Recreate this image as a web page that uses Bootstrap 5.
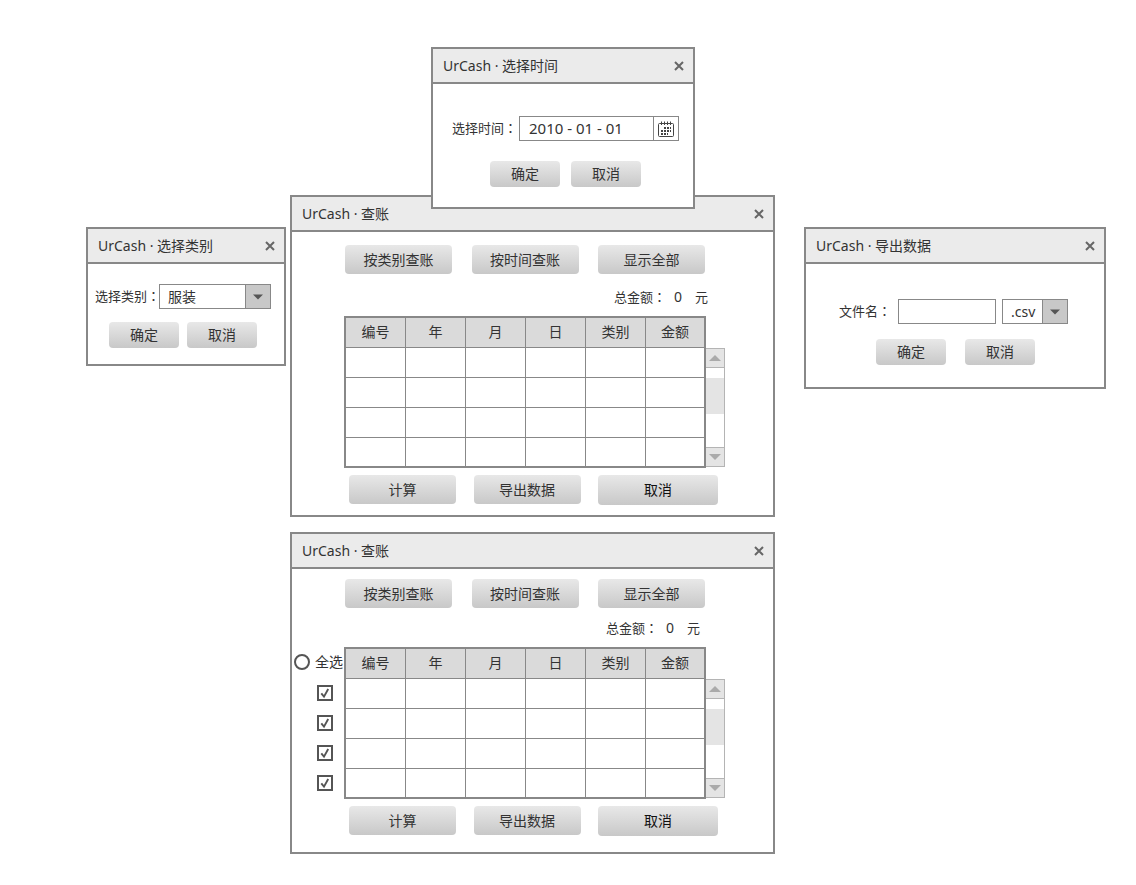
<!DOCTYPE html>
<html lang="zh-CN">
<head>
<meta charset="utf-8">
<meta name="viewport" content="width=device-width, initial-scale=1">
<title>UrCash</title>
<link href="https://cdn.jsdelivr.net/npm/bootstrap@5.3.0/dist/css/bootstrap.min.css" rel="stylesheet">
<style>
  :root { --line: #888; --ink: #333; }
  body { font-family: "Noto Sans", "Noto Sans CJK SC", sans-serif; font-size: 14px; line-height: 20px; color: var(--ink); background: #fff; }
  .desk { padding: 47px 24px 24px 86px; min-width: 1106px; }
  .win { border: 2px solid var(--line); background: #fff; }
  .win-bar { height: 35px; padding: 0 9px 0 10px; background: #ebebeb; border-bottom: 2px solid var(--line); }
  .win-bar h2 { font-size: 14px; line-height: 20px; font-weight: 400; }
  .win-close { width: 10px; height: 10px; color: #666; line-height: 0; }
  .win-side { margin-top: 180px; }
  .win-type { width: 200px; height: 139px; margin-right: 4px; }
  .win-export { width: 302px; height: 162px; margin-left: 29px; }
  .win-time { width: 264px; height: 162px; margin-left: 141px; margin-bottom: -14px; z-index: 2; }
  .win-main { width: 485px; height: 322px; }
  .gbtn { --bs-btn-font-size: 14px; --bs-btn-line-height: 20px; --bs-btn-padding-x: 0; --bs-btn-padding-y: 0; --bs-btn-border-width: 0; --bs-btn-border-radius: 4px; --bs-btn-color: var(--ink); --bs-btn-hover-color: #000; width: 107px; height: 29px; background: linear-gradient(#e8e8e8, #c8c8c8); }
  .gbtn-sm { width: 70px; height: 26px; }
  .gbtn-lg { --bs-btn-color: #111; width: 120px; height: 30px; }
  .lbl { font-size: 13px; white-space: nowrap; padding-bottom: 2px; min-width: 0; }
  .colon { font-family: "Noto Sans CJK TC", sans-serif; }
  .field { height: 25px; border: 1px solid var(--line); border-radius: 0; background: #fff; color: var(--ink); font-size: 14px; line-height: 20px; padding: 0 9px; min-width: 0; }
  select.field { appearance: none; width: 100%; padding-left: 8px; }
  .drop-cap { right: 0; top: 0; width: 26px; height: 25px; background: #c8c8c8; border: 1px solid var(--line); pointer-events: none; }
  .cal-btn { width: 25px; height: 25px; border: 1px solid var(--line); border-left: 0; background: #fff; }
  .time-field { width: 135px; font-size: 15px; padding-bottom: 2px; }
  .sum { height: 20px; margin-bottom: 8px; padding-bottom: 2px; font-size: 13px; }
  .sum output { font-size: 14px; margin: 0 13px 0 8px; }
  .gutter { width: 52px; }
  .all-pick { height: 31px; padding: 0 0 2px 2px; gap: 5px; }
  .all-pick label { white-space: nowrap; }
  .row-pick { height: 30px; padding-right: 11px; }
  .tick { appearance: none; width: 16px; height: 16px; margin: 0; border: 2px solid #555; background: #fff; }
  .tick[type=radio] { border-radius: 50%; }
  .tick[type=checkbox]:checked { background: url("data:image/svg+xml,%3Csvg xmlns='http://www.w3.org/2000/svg' viewBox='0 0 12 12'%3E%3Cpath d='M2.3 6.3 5 9.6 9.2 2' fill='none' stroke='%23555' stroke-width='1.9'/%3E%3C/svg%3E") center / 12px 12px no-repeat; }
  .ledger { width: 362px; table-layout: fixed; border: 2px solid var(--line); border-collapse: separate; border-spacing: 0; }
  .ledger th, .ledger td { height: 30px; padding: 0; border: 0 solid var(--line); border-width: 0 1px 1px 0; text-align: center; font-weight: 400; }
  .ledger th { background: #dadada; width: 60px; padding-bottom: 2px; }
  .ledger th:last-child, .ledger td:last-child { border-right-width: 0; width: 58px; }
  .ledger tbody tr:last-child td { height: 28px; border-bottom-width: 0; }
  .bar { width: 19px; height: 119px; margin-top: 32px; border: 1px solid #b4b4b4; border-left: 0; }
  .bar button { height: 19px; width: 18px; background: #e4e4e4; line-height: 0; }
  .bar-up { border-bottom: 1px solid #b4b4b4 !important; }
  .bar-down { border-top: 1px solid #b4b4b4 !important; }
  .thumb { height: 36px; margin-top: 10px; background: #e4e4e4; }
</style>
</head>
<body>
<svg class="d-none">
  <symbol id="x" viewBox="0 0 10 10"><path d="M1 1 9 9M9 1 1 9" stroke="currentColor" stroke-width="2" fill="none"/></symbol>
  <symbol id="caret" viewBox="0 0 10 6"><path d="M0 .5H10L5 5.5Z" fill="#555"/></symbol>
</svg>
<main class="desk d-flex align-items-start">

  <section class="win win-side win-type flex-shrink-0">
    <header class="win-bar d-flex align-items-center justify-content-between">
      <h2 class="m-0">UrCash · 选择类别</h2>
      <button class="win-close border-0 bg-transparent p-0" aria-label="关闭"><svg width="10" height="10"><use href="#x"/></svg></button>
    </header>
    <form style="padding:20px 13px 0 7px">
      <div class="d-flex align-items-center justify-content-between">
        <label class="lbl" for="kind">选择类别<span class="colon" lang="zh-TW">：</span></label>
        <div class="position-relative flex-shrink-0" style="width:112px">
          <select class="field" id="kind"><option>服装</option></select>
          <span class="drop-cap position-absolute d-flex align-items-center justify-content-center"><svg width="10" height="6"><use href="#caret"/></svg></span>
        </div>
      </div>
      <div class="d-flex justify-content-center" style="gap:8px;margin-top:13px">
        <button type="button" class="btn gbtn gbtn-sm">确定</button>
        <button type="button" class="btn gbtn gbtn-sm">取消</button>
      </div>
    </form>
  </section>

  <div class="flex-shrink-0">
    <section class="win win-time position-relative">
      <header class="win-bar d-flex align-items-center justify-content-between">
        <h2 class="m-0">UrCash · 选择时间</h2>
        <button class="win-close border-0 bg-transparent p-0" aria-label="关闭"><svg width="10" height="10"><use href="#x"/></svg></button>
      </header>
      <form style="padding:32px 14px 0 19px">
        <div class="d-flex align-items-center">
          <label class="lbl me-auto" for="date">选择时间<span class="colon" lang="zh-TW">：</span></label>
          <input class="field time-field" id="date" value="2010 - 01 - 01">
          <button type="button" class="cal-btn p-0 d-flex align-items-center justify-content-center" aria-label="日历">
            <svg width="16" height="16" viewBox="0 0 16 16" fill="none" stroke="#444"><path d="M1.500 2.500Q.5 2.500.5 3.500V14.500Q.5 15.500 1.500 15.500H14.500Q15.500 15.500 15.500 14.500V3.500Q15.500 2.500 14.500 2.500Z"/><path d="M3.500.5V4M6.500.5V4M9.500.5V4M12.500.5V4"/><path d="M6 7H13M3 10H13M3 13H10" stroke-width="2" stroke-dasharray="2 1"/></svg>
          </button>
        </div>
        <div class="d-flex justify-content-center" style="gap:11px;margin-top:20px">
          <button type="button" class="btn gbtn gbtn-sm">确定</button>
          <button type="button" class="btn gbtn gbtn-sm">取消</button>
        </div>
      </form>
    </section>

    <section class="win win-main">
      <header class="win-bar d-flex align-items-center justify-content-between">
        <h2 class="m-0">UrCash · 查账</h2>
        <button class="win-close border-0 bg-transparent p-0" aria-label="关闭"><svg width="10" height="10"><use href="#x"/></svg></button>
      </header>
      <div class="d-flex justify-content-between" style="padding:13px 68px 14px 53px">
        <button class="btn gbtn">按类别查账</button>
        <button class="btn gbtn">按时间查账</button>
        <button class="btn gbtn">显示全部</button>
      </div>
      <div class="sum d-flex justify-content-end align-items-center" style="padding-right:65px"><span>总金额<span class="colon" lang="zh-TW">：</span></span><output>0</output><span>元</span></div>
      <div class="d-flex align-items-start">
        <div class="gutter flex-shrink-0"></div>
        <table class="ledger">
          <thead><tr><th>编号</th><th>年</th><th>月</th><th>日</th><th>类别</th><th>金额</th></tr></thead>
          <tbody>
            <tr><td></td><td></td><td></td><td></td><td></td><td></td></tr>
            <tr><td></td><td></td><td></td><td></td><td></td><td></td></tr>
            <tr><td></td><td></td><td></td><td></td><td></td><td></td></tr>
            <tr><td></td><td></td><td></td><td></td><td></td><td></td></tr>
          </tbody>
        </table>
        <div class="bar d-flex flex-column">
          <button class="bar-up border-0 p-0" aria-label="向上"><svg width="12" height="6"><path d="M0 6H12L6 0Z" fill="#aaa"/></svg></button>
          <div class="thumb"></div>
          <button class="bar-down border-0 p-0 mt-auto" aria-label="向下"><svg width="12" height="6"><path d="M0 0H12L6 6Z" fill="#aaa"/></svg></button>
        </div>
      </div>
      <div class="d-flex justify-content-between" style="padding:7px 55px 0 57px">
        <button class="btn gbtn">计算</button>
        <button class="btn gbtn">导出数据</button>
        <button class="btn gbtn gbtn-lg">取消</button>
      </div>
    </section>

    <section class="win win-main" style="margin-top:15px">
      <header class="win-bar d-flex align-items-center justify-content-between">
        <h2 class="m-0">UrCash · 查账</h2>
        <button class="win-close border-0 bg-transparent p-0" aria-label="关闭"><svg width="10" height="10"><use href="#x"/></svg></button>
      </header>
      <div class="d-flex justify-content-between" style="padding:10px 68px 11px 53px">
        <button class="btn gbtn">按类别查账</button>
        <button class="btn gbtn">按时间查账</button>
        <button class="btn gbtn">显示全部</button>
      </div>
      <div class="sum d-flex justify-content-end align-items-center" style="padding-right:73px"><span>总金额<span class="colon" lang="zh-TW">：</span></span><output>0</output><span>元</span></div>
      <div class="d-flex align-items-start">
        <div class="gutter flex-shrink-0">
          <div class="all-pick d-flex align-items-center"><input class="tick flex-shrink-0" type="radio" id="all"><label for="all">全选</label></div>
          <div class="row-pick d-flex align-items-center justify-content-end"><input class="tick" type="checkbox" checked aria-label="第1行"></div>
          <div class="row-pick d-flex align-items-center justify-content-end"><input class="tick" type="checkbox" checked aria-label="第2行"></div>
          <div class="row-pick d-flex align-items-center justify-content-end"><input class="tick" type="checkbox" checked aria-label="第3行"></div>
          <div class="row-pick d-flex align-items-center justify-content-end"><input class="tick" type="checkbox" checked aria-label="第4行"></div>
        </div>
        <table class="ledger">
          <thead><tr><th>编号</th><th>年</th><th>月</th><th>日</th><th>类别</th><th>金额</th></tr></thead>
          <tbody>
            <tr><td></td><td></td><td></td><td></td><td></td><td></td></tr>
            <tr><td></td><td></td><td></td><td></td><td></td><td></td></tr>
            <tr><td></td><td></td><td></td><td></td><td></td><td></td></tr>
            <tr><td></td><td></td><td></td><td></td><td></td><td></td></tr>
          </tbody>
        </table>
        <div class="bar d-flex flex-column">
          <button class="bar-up border-0 p-0" aria-label="向上"><svg width="12" height="6"><path d="M0 6H12L6 0Z" fill="#aaa"/></svg></button>
          <div class="thumb"></div>
          <button class="bar-down border-0 p-0 mt-auto" aria-label="向下"><svg width="12" height="6"><path d="M0 0H12L6 6Z" fill="#aaa"/></svg></button>
        </div>
      </div>
      <div class="d-flex justify-content-between" style="padding:7px 55px 0 57px">
        <button class="btn gbtn">计算</button>
        <button class="btn gbtn">导出数据</button>
        <button class="btn gbtn gbtn-lg">取消</button>
      </div>
    </section>
  </div>

  <section class="win win-side win-export flex-shrink-0">
    <header class="win-bar d-flex align-items-center justify-content-between">
      <h2 class="m-0">UrCash · 导出数据</h2>
      <button class="win-close border-0 bg-transparent p-0" aria-label="关闭"><svg width="10" height="10"><use href="#x"/></svg></button>
    </header>
    <form style="padding:35px 36px 0 33px">
      <div class="d-flex align-items-center">
        <label class="lbl me-auto" for="file">文件名<span class="colon" lang="zh-TW">：</span></label>
        <input class="field" id="file" style="width:98px">
        <div class="position-relative" style="width:66px;margin-left:6px">
          <select class="field" aria-label="格式"><option>.csv</option></select>
          <span class="drop-cap position-absolute d-flex align-items-center justify-content-center"><svg width="10" height="6"><use href="#caret"/></svg></span>
        </div>
      </div>
      <div class="d-flex justify-content-end" style="gap:19px;margin-top:15px;padding-right:33px">
        <button type="button" class="btn gbtn gbtn-sm">确定</button>
        <button type="button" class="btn gbtn gbtn-sm">取消</button>
      </div>
    </form>
  </section>
</main>
</body>
</html>
